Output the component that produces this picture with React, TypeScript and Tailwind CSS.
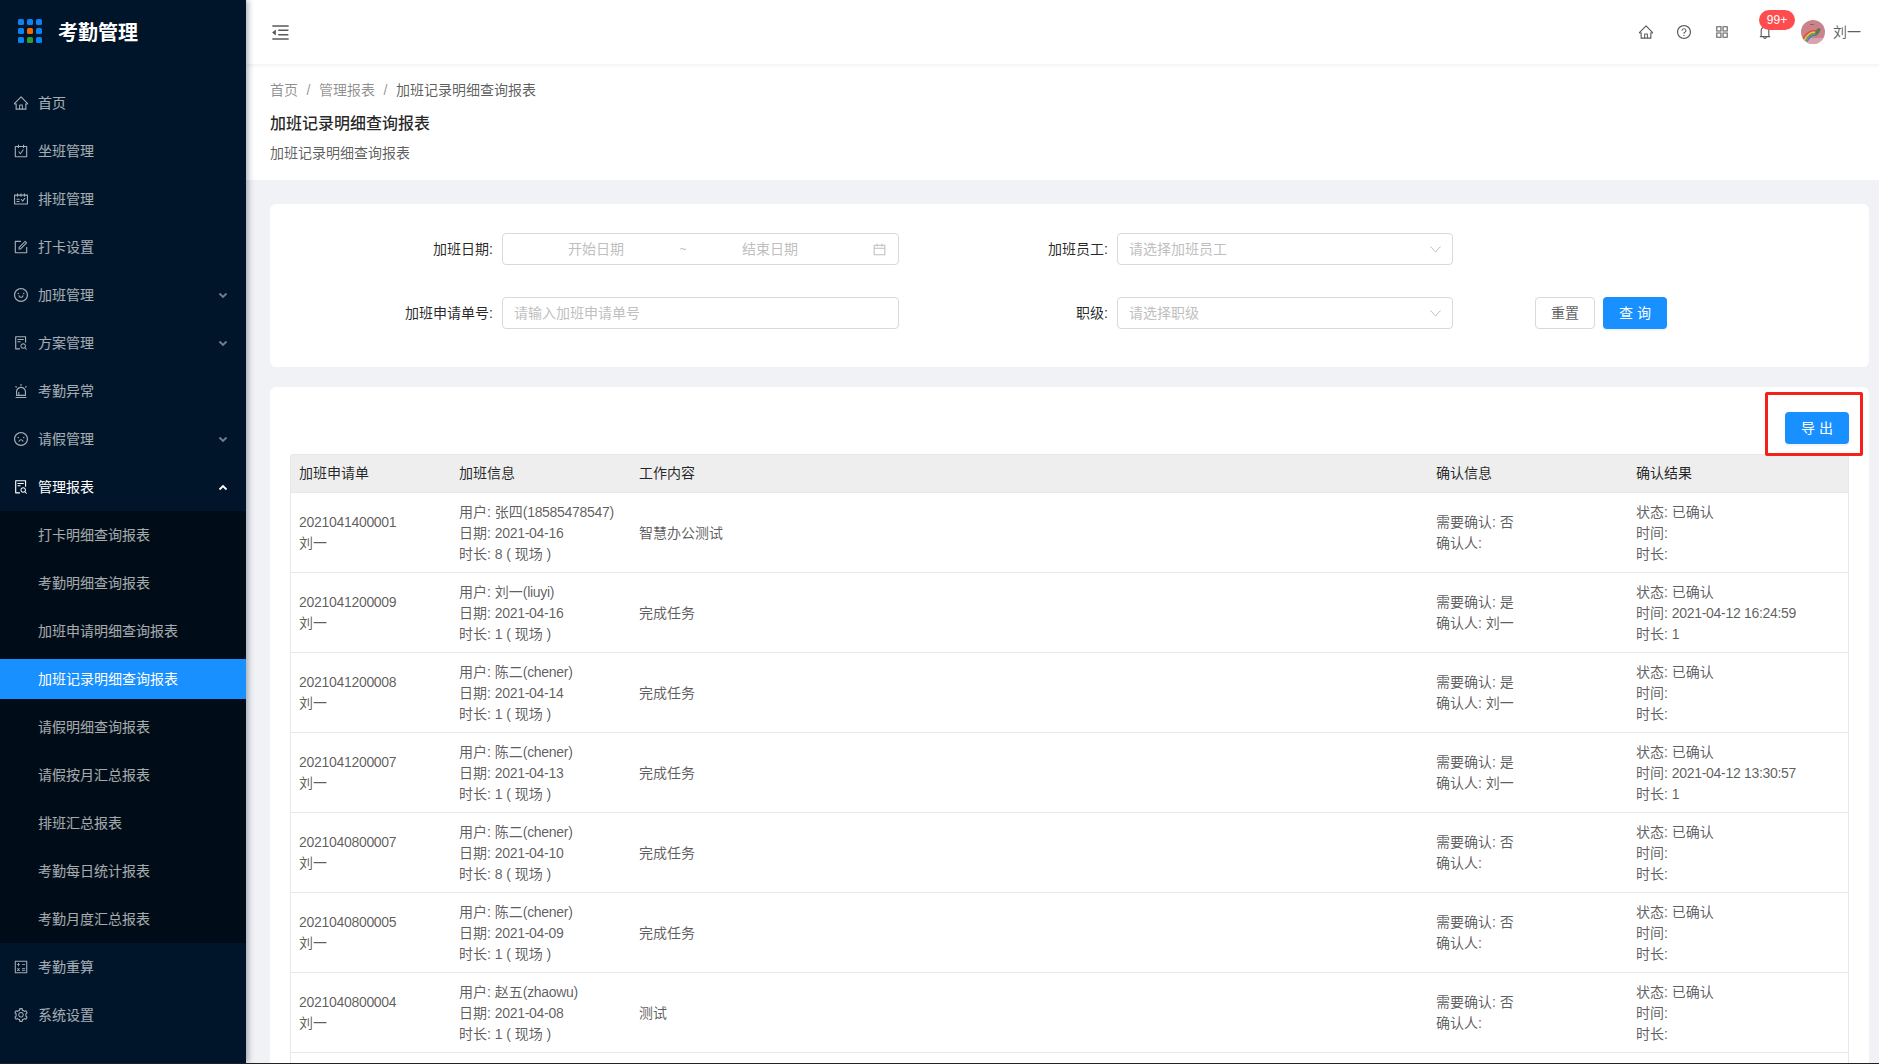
import React from 'react';
import {
  AiOutlineAlert,
  AiOutlineAppstore,
  AiOutlineBell,
  AiOutlineCalculator,
  AiOutlineCalendar,
  AiOutlineCarryOut,
  AiOutlineFileSearch,
  AiOutlineForm,
  AiOutlineFrown,
  AiOutlineHome,
  AiOutlineMenuFold,
  AiOutlineQuestionCircle,
  AiOutlineSchedule,
  AiOutlineSetting,
  AiOutlineSmile,
} from 'react-icons/ai';

const menuTop = [
  { label: '首页', icon: AiOutlineHome },
  { label: '坐班管理', icon: AiOutlineCarryOut },
  { label: '排班管理', icon: AiOutlineSchedule },
  { label: '打卡设置', icon: AiOutlineForm },
  { label: '加班管理', icon: AiOutlineSmile, arrow: true },
  { label: '方案管理', icon: AiOutlineFileSearch, arrow: true },
  { label: '考勤异常', icon: AiOutlineAlert },
  { label: '请假管理', icon: AiOutlineFrown, arrow: true },
];

const subMenu = [
  '打卡明细查询报表',
  '考勤明细查询报表',
  '加班申请明细查询报表',
  '加班记录明细查询报表',
  '请假明细查询报表',
  '请假按月汇总报表',
  '排班汇总报表',
  '考勤每日统计报表',
  '考勤月度汇总报表',
];

const rows = [
  { no: '2021041400001', user: '张四', account: '(18585478547)', date: '2021-04-16', hours: '8', work: '智慧办公测试', need: '否', by: '', time: '', len: '' },
  { no: '2021041200009', user: '刘一', account: '(liuyi)', date: '2021-04-16', hours: '1', work: '完成任务', need: '是', by: '刘一', time: '2021-04-12 16:24:59', len: '1' },
  { no: '2021041200008', user: '陈二', account: '(chener)', date: '2021-04-14', hours: '1', work: '完成任务', need: '是', by: '刘一', time: '', len: '' },
  { no: '2021041200007', user: '陈二', account: '(chener)', date: '2021-04-13', hours: '1', work: '完成任务', need: '是', by: '刘一', time: '2021-04-12 13:30:57', len: '1' },
  { no: '2021040800007', user: '陈二', account: '(chener)', date: '2021-04-10', hours: '8', work: '完成任务', need: '否', by: '', time: '', len: '' },
  { no: '2021040800005', user: '陈二', account: '(chener)', date: '2021-04-09', hours: '1', work: '完成任务', need: '否', by: '', time: '', len: '' },
  { no: '2021040800004', user: '赵五', account: '(zhaowu)', date: '2021-04-08', hours: '1', work: '测试', need: '否', by: '', time: '', len: '' },
];

const Arrow = ({ up = false, active = false }: { up?: boolean; active?: boolean }) => (
  <svg
    width="10"
    height="7"
    viewBox="0 0 10 7"
    fill="none"
    stroke={active ? '#ffffff' : 'rgba(255,255,255,0.45)'}
    strokeWidth="1.8"
    className="ml-auto mr-[18px]"
  >
    <path d={up ? 'M1.5 5.5 L5 2 L8.5 5.5' : 'M1.5 1.5 L5 5 L8.5 1.5'} />
  </svg>
);

const Sidebar = () => (
  <aside className="relative z-20 flex h-full w-[246px] shrink-0 flex-col bg-[#001529] shadow-[2px_0_6px_rgba(0,21,41,0.35)]">
    <div className="flex h-16 shrink-0 items-center pl-[18px]">
      <div className="mb-[2px] grid grid-cols-3 gap-[3px]">
        {['#0a84f5', '#0a84f5', '#0a84f5', '#0a84f5', '#f56a00', '#0a84f5', '#0a84f5', '#2b9e3c', '#0a84f5'].map((c, i) => (
          <span key={i} className="h-[6px] w-[6px] rounded-[1.5px]" style={{ background: c }} />
        ))}
      </div>
      <span className="ml-4 mt-[2px] text-[20px] font-bold text-white">考勤管理</span>
    </div>
    <nav className="flex flex-col pt-[15px] text-sm text-white/65">
      {menuTop.map((item) => (
        <div key={item.label} className="my-1 flex h-10 items-center pl-[13px]">
          <item.icon size={16} className="mr-[9px]" />
          <span>{item.label}</span>
          {item.arrow && <Arrow />}
        </div>
      ))}
      <div className="my-1 flex h-10 items-center pl-[13px] text-white">
        <AiOutlineFileSearch size={16} className="mr-[9px]" />
        <span>管理报表</span>
        <Arrow up active />
      </div>
      <div className="flex flex-col bg-[#000c17]">
        {subMenu.map((label) => (
          <div
            key={label}
            className={`my-1 flex h-10 items-center pl-[38px] ${label === '加班记录明细查询报表' ? 'bg-[#1890ff] text-white' : ''}`}
          >
            {label}
          </div>
        ))}
      </div>
      <div className="my-1 flex h-10 items-center pl-[13px]">
        <AiOutlineCalculator size={16} className="mr-[9px]" />
        <span>考勤重算</span>
      </div>
      <div className="my-1 flex h-10 items-center pl-[13px]">
        <AiOutlineSetting size={16} className="mr-[9px]" />
        <span>系统设置</span>
      </div>
    </nav>
  </aside>
);

const Avatar = () => (
  <svg width="24" height="24" viewBox="0 0 24 24" className="shrink-0 rounded-full">
    <rect width="24" height="24" fill="#c9838a" />
    <rect y="18" width="24" height="6" fill="#d9a3ad" />
    <path d="M2 19 C6 12 10 10 15 11" fill="none" stroke="#e8443a" strokeWidth="1.4" />
    <path d="M3 20.5 C7 13.5 10 11.5 15 12.5" fill="none" stroke="#f0c52e" strokeWidth="1.4" />
    <path d="M4.5 21 C8 15 11 13 15 14" fill="none" stroke="#4cae4f" strokeWidth="1.4" />
    <path d="M6 21.5 C9 16.5 12 14.5 15 15.5" fill="none" stroke="#5a6fd0" strokeWidth="1.4" />
    <path d="M14 12 L17 8 L20 9 L18 13 L15 16 Z" fill="#5c7a52" />
    <rect x="9" y="4" width="4" height="1" fill="#a8565f" />
  </svg>
);

const Header = () => (
  <header className="relative z-10 flex h-16 shrink-0 items-center bg-white pl-[24px] pr-[18px] shadow-[0_1px_4px_rgba(0,21,41,0.08)]">
    <AiOutlineMenuFold size={21} className="text-[#595959]" />
    <div className="ml-auto flex items-center text-[#595959]">
      <AiOutlineHome size={16} />
      <AiOutlineQuestionCircle size={16} className="ml-[22px]" />
      <AiOutlineAppstore size={16} className="ml-[22px]" />
      <div className="relative ml-[27px] mr-[28px] flex">
        <AiOutlineBell size={16} />
        <span className="absolute left-[2px] top-[-14px] flex h-5 w-9 items-center justify-center rounded-[10px] bg-[#ff4d4f] text-xs text-white">
          99+
        </span>
      </div>
      <Avatar />
      <span className="ml-2 text-sm text-black/65">刘一</span>
    </div>
  </header>
);

const PageTitle = () => (
  <div className="h-[116px] bg-white pl-6 pt-[15px]">
    <div className="flex h-[22px] items-center text-sm text-black/45">
      <span>首页</span>
      <span className="w-[21px] text-center">/</span>
      <span>管理报表</span>
      <span className="w-[21px] text-center">/</span>
      <span className="text-black/65">加班记录明细查询报表</span>
    </div>
    <div className="mt-[11px] text-base font-medium leading-6 text-black/85">加班记录明细查询报表</div>
    <div className="mt-[6px] text-sm leading-[22px] text-black/65">加班记录明细查询报表</div>
  </div>
);

const Chevron = () => (
  <svg width="11" height="7" viewBox="0 0 11 7" fill="none" stroke="#bfbfbf" className="ml-auto">
    <path d="M0.5 0.5 L5.5 6 L10.5 0.5" />
  </svg>
);

const FieldLabel = ({ children }: { children: React.ReactNode }) => (
  <div className="flex h-8 items-center justify-end pr-[9px] text-sm text-black/85">{children}</div>
);

const Field = ({ children }: { children: React.ReactNode }) => (
  <div className="flex h-8 items-center rounded border border-[#d9d9d9] bg-white px-[11px] text-sm text-[#bfbfbf]">
    {children}
  </div>
);

const SearchForm = () => (
  <section className="rounded-md bg-white pb-[38px] pt-[29px]">
    <div className="grid grid-cols-[232px_397px_218px_336px_82px_auto] gap-y-8">
      <FieldLabel>加班日期:</FieldLabel>
      <Field>
        <span className="w-[164px] text-center">开始日期</span>
        <span className="w-[10px] text-center text-xs">~</span>
        <span className="w-[164px] text-center">结束日期</span>
        <AiOutlineCalendar size={15} className="ml-auto" />
      </Field>
      <FieldLabel>加班员工:</FieldLabel>
      <Field>
        请选择加班员工
        <Chevron />
      </Field>
      <div />
      <div />
      <FieldLabel>加班申请单号:</FieldLabel>
      <Field>请输入加班申请单号</Field>
      <FieldLabel>职级:</FieldLabel>
      <Field>
        请选择职级
        <Chevron />
      </Field>
      <div />
      <div className="flex gap-2">
        <button className="h-8 w-[60px] rounded border border-[#d9d9d9] bg-white text-sm text-black/65">重置</button>
        <button className="h-8 w-16 rounded bg-[#1890ff] text-sm text-white shadow-[0_2px_0_rgba(0,0,0,0.045)]">查 询</button>
      </div>
    </div>
  </section>
);

const Num = ({ children }: { children: React.ReactNode }) => (
  <span className="tracking-[-0.3px]">{children}</span>
);

const OvertimeTable = () => (
  <section className="relative mt-5 rounded-md bg-white px-5 pt-[25px]">
    <div className="absolute right-[6px] top-[5px] h-[64px] w-[98px] rounded-[2px] border-[3px] border-[#f5201a]" />
    <div className="flex justify-end">
      <button className="h-8 w-16 rounded bg-[#1890ff] text-sm text-white shadow-[0_2px_0_rgba(0,0,0,0.045)]">导 出</button>
    </div>
    <table className="mt-[10px] w-full table-fixed border-separate border-spacing-0 text-sm leading-[21px] text-black/65">
      <colgroup>
        <col className="w-[161px]" />
        <col className="w-[180px]" />
        <col />
        <col className="w-[200px]" />
        <col className="w-[221px]" />
      </colgroup>
      <thead>
        <tr className="bg-[#eeeeee] text-left text-black/85">
          {['加班申请单', '加班信息', '工作内容', '确认信息', '确认结果'].map((h, i) => (
            <th
              key={h}
              className={`border-y border-[#e8e8e8] px-2 py-2 font-normal ${i === 0 ? 'rounded-tl border-l' : ''} ${i === 4 ? 'rounded-tr border-r' : ''}`}
            >
              {h}
            </th>
          ))}
        </tr>
      </thead>
      <tbody>
        {rows.map((r) => (
          <tr key={r.no}>
            <td className="border-b border-l border-[#e8e8e8] px-2 py-2">
              <div><Num>{r.no}</Num></div>
              <div>刘一</div>
            </td>
            <td className="whitespace-nowrap border-b border-[#e8e8e8] px-2 pb-[7px] pt-[9px]">
              <div>用户: {r.user}<Num>{r.account}</Num></div>
              <div>日期: <Num>{r.date}</Num></div>
              <div>时长: <Num>{r.hours}</Num> ( 现场 )</div>
            </td>
            <td className="border-b border-[#e8e8e8] px-2 pb-[7px] pt-[9px]">{r.work}</td>
            <td className="border-b border-[#e8e8e8] px-2 py-2">
              <div>需要确认: {r.need}</div>
              <div>确认人: {r.by}</div>
            </td>
            <td className="whitespace-nowrap border-b border-r border-[#e8e8e8] px-2 pb-[7px] pt-[9px]">
              <div>状态: 已确认</div>
              <div>时间: <Num>{r.time}</Num></div>
              <div>时长: <Num>{r.len}</Num></div>
            </td>
          </tr>
        ))}
        <tr>
          <td className="h-[80px] border-l border-[#e8e8e8]" />
          <td />
          <td />
          <td />
          <td className="border-r border-[#e8e8e8]" />
        </tr>
      </tbody>
    </table>
  </section>
);

export default function App() {
  return (
    <div
      className="flex h-[1064px] w-[1879px] flex-col overflow-hidden bg-[#f0f2f5]"
      style={{ fontFamily: '"Liberation Sans", "Noto Sans CJK SC", sans-serif' }}
    >
      <div className="flex min-h-0 flex-1">
        <Sidebar />
        <div className="flex min-w-0 flex-1 flex-col">
          <Header />
          <main className="min-h-0 flex-1 overflow-hidden">
            <PageTitle />
            <div className="pl-6 pr-[10px] pt-6">
              <SearchForm />
              <OvertimeTable />
            </div>
          </main>
        </div>
      </div>
      <div className="h-px shrink-0 bg-[#222222]" />
    </div>
  );
}
